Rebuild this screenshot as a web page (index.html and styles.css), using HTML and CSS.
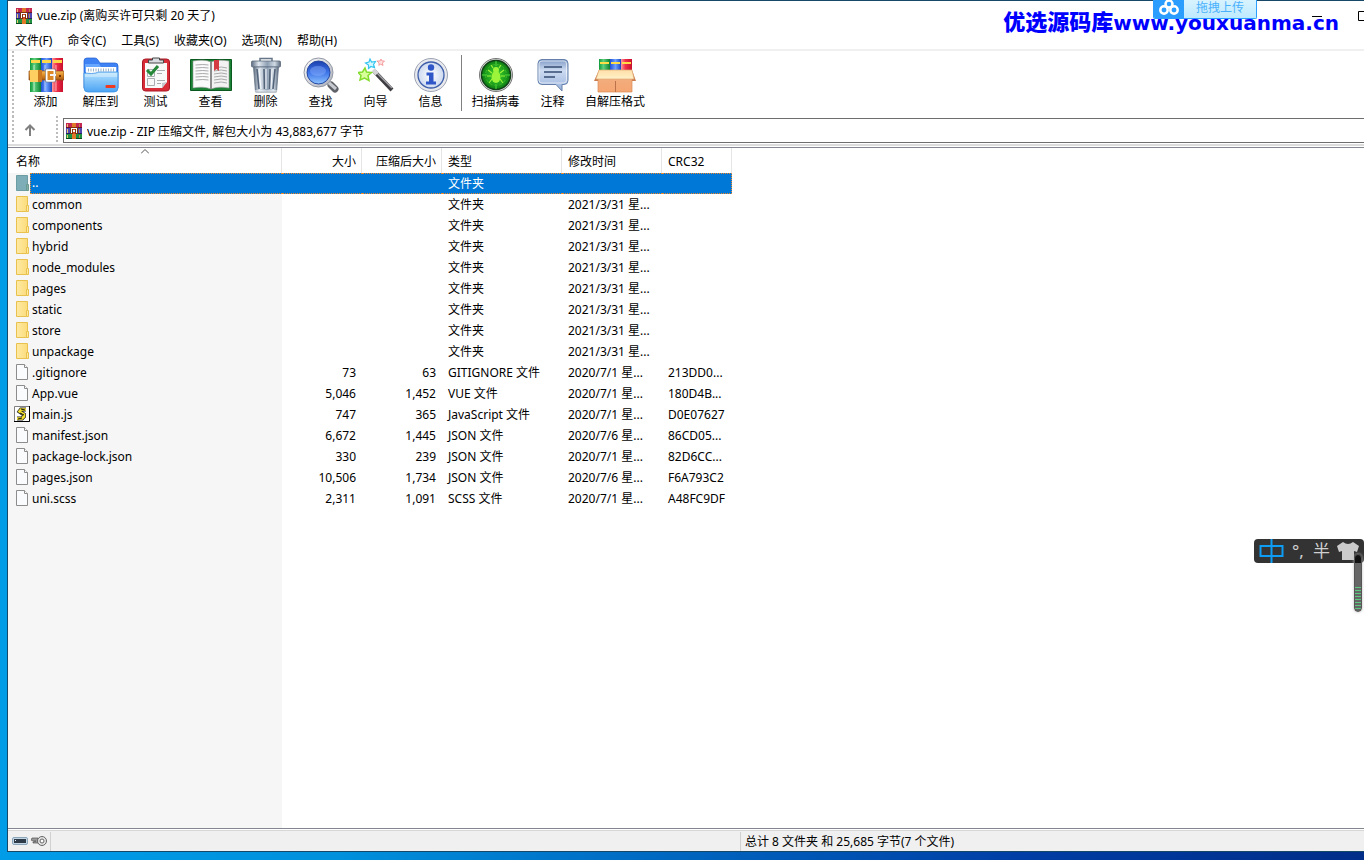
FILE: index.html
```html
<!DOCTYPE html>
<html lang="zh-CN">
<head>
<meta charset="utf-8">
<title>vue.zip</title>
<link rel="stylesheet" href="styles.css">
</head>
<body>
<svg class="defs" aria-hidden="true">
  <defs>
    <linearGradient id="g-red"><stop offset="0" stop-color="#ff9a9a"/><stop offset=".4" stop-color="#f0304a"/><stop offset="1" stop-color="#c80f2c"/></linearGradient>
    <linearGradient id="g-green"><stop offset="0" stop-color="#0f9a3c"/><stop offset=".4" stop-color="#5fd07c"/><stop offset="1" stop-color="#0b8030"/></linearGradient>
    <linearGradient id="g-blue"><stop offset="0" stop-color="#1f50d8"/><stop offset=".5" stop-color="#6da0ff"/><stop offset="1" stop-color="#1746c0"/></linearGradient>
    <linearGradient id="g-belt" x2="0" y2="1"><stop offset="0" stop-color="#f5b955"/><stop offset=".5" stop-color="#dc8826"/><stop offset="1" stop-color="#a8570e"/></linearGradient>
    <linearGradient id="g-fold" x2="0" y2="1"><stop offset="0" stop-color="#b4e2ff"/><stop offset="1" stop-color="#4ba3f3"/></linearGradient>
    <linearGradient id="g-metal"><stop offset="0" stop-color="#5d6c80"/><stop offset=".25" stop-color="#dfe6ee"/><stop offset=".55" stop-color="#8fa0b4"/><stop offset=".8" stop-color="#d0dae4"/><stop offset="1" stop-color="#5d6c80"/></linearGradient>
    <linearGradient id="g-lens" x2="0" y2="1"><stop offset="0" stop-color="#1a3fae"/><stop offset=".5" stop-color="#3d74e8"/><stop offset="1" stop-color="#8fc4ff"/></linearGradient>
    <linearGradient id="g-ring" x2="1" y2="1"><stop offset="0" stop-color="#fff"/><stop offset="1" stop-color="#a7acb8"/></linearGradient>
    <linearGradient id="g-bubble" x2="0" y2="1"><stop offset="0" stop-color="#7f9ac6"/><stop offset=".35" stop-color="#cddbf1"/><stop offset="1" stop-color="#98b2dc"/></linearGradient>
    <linearGradient id="g-box" x2="0" y2="1"><stop offset="0" stop-color="#f2ae80"/><stop offset="1" stop-color="#f5a672"/></linearGradient>
    <linearGradient id="g-flap" x2="0" y2="1"><stop offset="0" stop-color="#ffdfa8"/><stop offset="1" stop-color="#fff0c8"/></linearGradient>
    <linearGradient id="g-dir" x2="1"><stop offset="0" stop-color="#ffeaa4"/><stop offset="1" stop-color="#fbdc7c"/></linearGradient>
    <radialGradient id="g-scan"><stop offset="0" stop-color="#42d830"/><stop offset=".7" stop-color="#1d9c1c"/><stop offset="1" stop-color="#0c7a12"/></radialGradient>
    <radialGradient id="g-info"><stop offset="0" stop-color="#fff"/><stop offset="1" stop-color="#ccd9ef"/></radialGradient>
  </defs>
  <symbol id="i-rar" viewBox="0 0 16 16">
    <path fill="#c42850" d="M0 0h16v5H0z"/><path fill="#5048b0" d="M0 5h16v6H0z"/><path fill="#1f8f42" d="M0 11h16v5H0z"/>
    <path fill="#6c1228" d="M0 4h16v1H0z"/><path fill="#242464" d="M0 10h16v1H0z"/><path fill="#0a4a1c" d="M0 15h16v1H0z"/>
    <path fill="#e8c86c" d="M1 1h1v3H1zm0 5h1v4H1zm0 6h1v3H1z"/><path fill="#b98a50" d="M13 1h1v3h-1zm0 5h1v4h-1zm0 6h1v3h-1z"/>
    <path fill="#e07a28" d="M6 0h4v16H6z"/><path fill="#7a3410" d="M4 4h8v7H4z"/><path fill="#d84a1c" d="M7 5h2v6H7z"/><path fill="#fff" d="M5 5h6v1H5zM5 6h1v4H5zm5 0h1v4h-1zM7 7h2v2H7z"/>
  </symbol>
  <symbol id="i-dir" viewBox="0 0 14 16"><path fill="url(#g-dir)" stroke="#e8c14e" d="M.5.5h11v15H.5z"/><path fill="#ffeaa0" stroke="#e8c14e" d="M10.500 9.500h2v6h-2z"/></symbol>
  <symbol id="i-dir-sel" viewBox="0 0 14 16"><path fill="#7dadb6" stroke="#6c9da3" d="M.5.5h11v15H.5z"/><path fill="#80aea8" stroke="#6b9a91" d="M10.500 9.500h2v6h-2z"/></symbol>
  <symbol id="i-file" viewBox="0 0 14 16"><path fill="#fafbfc" stroke="#8c8c8c" d="M.5.500h8l3 3v12H.5z"/><path fill="#fff" stroke="#8c8c8c" d="M8.500.5v3h3"/></symbol>
  <symbol id="i-js" viewBox="0 0 16 16"><path fill="#fff" stroke="#808080" d="M.5.5h15v15H.5z"/><path fill="none" stroke="#000" d="M15.500 0v15.500H0"/><path fill="none" stroke="#222" stroke-width="4" d="M12 3.500H7L5.500 5.500l4.500 3v2L8 12.500H3"/><path fill="none" stroke="#f4e22c" stroke-width="2.600" d="M12 3.500H7L5.500 5.500l4.500 3v2L8 12.500H3"/><path stroke="#111" d="m7 3 4 1M6 7l4 2M4 13l4-1"/></symbol>
</svg>

<main class="window">
  <header class="title-bar">
    <svg class="icon-16"><use href="#i-rar"/></svg>
    <h1>vue.zip (离购买许可只剩 20 天了)</h1>
    <div class="controls">
      <button type="button" aria-label="最小化"><svg viewBox="0 0 10 10"><path d="M0 5.500h10"/></svg></button>
      <button type="button" aria-label="最大化"><svg viewBox="0 0 10 10"><path d="M.5.5h9v9h-9z"/></svg></button>
    </div>
  </header>

  <nav class="menu">
    <button type="button">文件(F)</button><button type="button">命令(C)</button><button type="button">工具(S)</button><button type="button">收藏夹(O)</button><button type="button">选项(N)</button><button type="button">帮助(H)</button>
  </nav>

  <div class="toolbar">
    <span class="grip"></span>
    <button type="button" class="tool"><svg viewBox="0 0 36 36">
      <path fill="url(#g-green)" d="M2 1h11v34H2z"/><path fill="url(#g-blue)" d="M13 1h11v34H13z"/><path fill="url(#g-red)" d="M24 1h11v34H24z"/>
      <path fill="#ffd84a" d="M3 3h9v3H3zm11 0h9v3h-9zm11 0h9v3h-9z"/><path fill="#fff" opacity=".3" d="M5 8h2v26H5zm11 0h2v26h-2zm11 0h2v26h-2z"/>
      <path fill="url(#g-belt)" stroke="#8a4c12" stroke-width=".7" d="M1 14h35v9H1z"/><path fill="#ffcf62" d="M2 13h8l4 5-4 7H2z"/><path fill="#cc7820" d="M10 13h4v12h-4z"/>
      <rect x="18.500" y="13" width="8" height="11" rx="1" fill="#dc8826" stroke="#fff" stroke-width="2"/><path fill="none" stroke="#777" stroke-width=".6" d="M17.500 12h10v13h-10z"/><path fill="#f4f4f4" d="M22 17h6v2h-6z"/><path fill="#6e3608" d="M31 18h2v2h-2z"/>
    </svg>添加</button>
    <button type="button" class="tool"><svg viewBox="0 0 36 36">
      <path fill="#3f82f4" stroke="#205fd0" stroke-width=".7" d="M1 31V4q0-3 3-3h8q2 0 3 2l2 3h15q3 0 3 3v22z"/><path fill="#68a7ff" d="M2 7h14l2 3h16v5H2z"/>
      <path fill="#fff" d="M3 10h30v10H3z"/><path stroke="#9ab2c8" stroke-dasharray="1 1.500" stroke-width="3" d="M5 13h27"/>
      <path fill="url(#g-fold)" stroke="#3b8fe2" stroke-width=".8" d="M1 16q9 1 12 0l2-1h20v16q0 4-4 4H5q-4 0-4-4z"/><path fill="#fff" opacity=".35" d="M2 17q10 1 14-1h18v4H2z"/><rect x="22.500" y="28" width="10" height="3" rx="1" fill="#ee3a20"/>
    </svg>解压到</button>
    <button type="button" class="tool"><svg viewBox="0 0 36 36">
      <rect x="4.500" y="2" width="27" height="32" rx="3" fill="#d82c38" stroke="#a81824"/><path fill="#f8f8f8" d="M7 6h22v19l-5 6H7z"/><path fill="#c4c8cc" d="m29 25-5 6v-5z"/>
      <path fill="#d9dde1" stroke="#444" d="M10.500 6V3h4V1h7v2h4v3z"/><path fill="none" stroke="#a8adb2" d="M9.500 12.500h7v7h-7zm0 9h7v7h-7zM19 13.500h8m-8 3h5m-5 7h8m-8 3h4"/><path fill="none" stroke="#248838" stroke-width="3" d="m9 13 4 4 7-8"/>
    </svg>测试</button>
    <button type="button" class="tool"><svg class="wide" viewBox="0 0 42 36">
      <path fill="#1b8134" stroke="#0a5a20" d="M.5 2.500h41v31H.5z"/><path fill="#fafafa" stroke="#999" stroke-width=".6" d="M3 4q12-2 18 1v27q-7-3-18-1z"/><path fill="#f2f2f2" stroke="#999" stroke-width=".6" d="M39 4Q27 2 21 5v27q7-3 18-1z"/>
      <path fill="none" stroke="#a9aaac" d="M5.500 8q8-1 13 0m-13 3q8-1 13 0m-13 3q8-1 13 0m-13 3q8-1 13 0m-13 3q8-1 13 0m-13 3q8-1 13 0M24 11q8-2 13 0m-13 3q8-2 13 0m-13 3q8-2 13 0m-13 3q8-2 13 0m-13 3q8-2 13 0m-13 3q8-2 13 0"/><path stroke="#8c8c8c" stroke-width="2" d="M21 5v27"/><path fill="#d43a42" d="M24 3h5v11l-2.500-2L24 14z"/>
    </svg>查看</button>
    <button type="button" class="tool"><svg viewBox="0 0 36 36">
      <path fill="none" stroke="#667689" stroke-width="1.500" d="M12 4V1.500h12V4"/><rect x="3.500" y="4" width="29" height="6" rx="1" fill="url(#g-metal)" stroke="#5c6a7c" stroke-width=".8"/>
      <path fill="url(#g-metal)" stroke="#617083" stroke-width=".8" d="M5.500 10h25l-2 25h-21z"/><path stroke="#53647a" stroke-width="1.600" d="m9 12 2 20m5-20 .5 20M22 12l-.5 20M27 12l-2 20"/><path stroke="#f5f8fb" d="m11 12 2 20m5-20v20m6-20-1 20M7 34h22"/>
    </svg>删除</button>
    <button type="button" class="tool"><svg viewBox="0 0 36 36">
      <path stroke="#5e6168" stroke-width="7" stroke-linecap="round" d="m28 28 4 4"/><path stroke="#c6cad0" stroke-width="3" d="m25 25 8 7"/><circle cx="15.500" cy="15.500" r="14.500" fill="url(#g-ring)" stroke="#9398a4"/><circle cx="15.500" cy="15.500" r="11.500" fill="url(#g-lens)" stroke="#2447a0"/><ellipse cx="15" cy="14" rx="8" ry="5" fill="#95b8ff" opacity=".4"/>
    </svg>查找</button>
    <button type="button" class="tool"><svg viewBox="0 0 36 36">
      <path stroke="#3d3d42" stroke-width="4" d="m16 14 18 19"/><path stroke="#a4a4a8" stroke-width="1.500" d="m16 13 18 18"/><path stroke="#d5d5d8" stroke-width="4.500" d="m15 13 4 4"/>
      <path fill="#d8ff9c" stroke="#83dc2d" stroke-width="1.500" d="m7 11 1.500 4 5 .5-3.500 3 1 5-4.500-2.500L2 23l1-4.500-3-3 4.500-.5z"/><path fill="#d5f8ff" stroke="#35c4ef" stroke-width="1.200" d="m12 2 1.500 3 4-.5-2 3 1 3-3.500-1-2.500 2V8L7.500 6 11 5z"/><path fill="#ffe0e0" stroke="#f28a8a" stroke-width=".8" d="m23 2 1 2h2.500l-2 2 .5 2.500-2.500-1.500-1.500 1.500V6l-2-2h3z"/>
    </svg>向导</button>
    <button type="button" class="tool"><svg viewBox="0 0 36 36">
      <circle cx="18" cy="18" r="16.500" fill="#e8e9ed" stroke="#9da4b4"/><circle cx="18" cy="18" r="13" fill="url(#g-info)" stroke="#3e5ea9" stroke-width="1.300"/><circle cx="18" cy="10.500" r="3.200" fill="#2f57c8"/><path fill="#2f57c8" d="M13.500 15.500h7v9h2.500v3H13v-3h3v-6h-2.500z"/>
    </svg>信息</button>
    <span class="divider"></span>
    <button type="button" class="tool"><svg viewBox="0 0 36 36">
      <circle cx="18" cy="18" r="16.500" fill="#d5d8d5" stroke="#777"/><circle cx="18" cy="18" r="14.500" fill="url(#g-scan)" stroke="#124018" stroke-width="1.500"/><path fill="none" stroke="#50d840" d="M18 4v5m0 18v5M4 18h5m18 0h5"/><circle cx="18" cy="18" r="10.500" fill="none" stroke="#3cb82c" stroke-dasharray="3 2"/>
      <g fill="#9cf53a"><ellipse cx="18" cy="20" rx="4.500" ry="6"/><circle cx="18" cy="13" r="3"/></g><path fill="none" stroke="#9cf53a" stroke-width="1.200" d="m15 11-2-3m8 3 2-3m-9 8-4-3m12 3 4-3m-13 6H9m14 0h4m-13 3-3 4m11-4 3 4"/>
    </svg>扫描病毒</button>
    <button type="button" class="tool"><svg viewBox="0 0 36 36">
      <path fill="url(#g-bubble)" stroke="#6480aa" d="M7 2.500h22q4 0 4 4v17q0 4-4 4h-2V34l-6-6.500H7q-4 0-4-4v-17q0-4 4-4z"/><path fill="none" stroke="#fff" opacity=".6" d="M7 4h22q2.500 0 2.500 3v16q0 3-3 3H7q-3 0-3-3V7q0-3 3-3z"/><path stroke="#344c72" stroke-width="1.500" d="M9 10h18M9 15h18M9 20h11"/>
    </svg>注释</button>
    <button type="button" class="tool"><svg class="wide" viewBox="0 0 42 36">
      <path fill="url(#g-green)" d="M5 2h11v14H5z"/><path fill="url(#g-blue)" d="M16 2h11v14H16z"/><path fill="url(#g-red)" d="M27 2h11v14H27z"/><path fill="#ffdd46" d="M6 5h9v2H6zm11 0h9v2h-9zm11 0h9v2h-9z"/>
      <path fill="#cb7d50" d="m5 13-5 11h5zm33 0 4 11h-4z"/><path fill="url(#g-box)" stroke="#d78a58" stroke-width=".7" d="M4 18h34v17H4z"/><path stroke="#bc724a" d="M21.500 24v11"/><path fill="url(#g-flap)" stroke="#e0ae78" stroke-width=".7" d="M5 13h33l2 9H2z"/>
    </svg>自解压格式</button>
  </div>

  <div class="address-bar">
    <span class="grip"></span>
    <button type="button" class="up" aria-label="上一级"><svg viewBox="0 0 12 12"><path d="M6 12V2M1.500 6 6 1.500 10.500 6"/></svg></button>
    <span class="grip"></span>
    <label class="address"><svg class="icon-16"><use href="#i-rar"/></svg><input type="text" aria-label="地址" value="vue.zip - ZIP 压缩文件, 解包大小为 43,883,677 字节"></label>
  </div>

  <section class="list">
    <table>
      <colgroup><col class="c-name"><col class="c-num"><col class="c-num"><col class="c-type"><col class="c-date"><col class="c-crc"></colgroup>
      <thead><tr><th class="sorted">名称<svg viewBox="0 0 8 5"><path d="M0 4.500 4 .5l4 4"/></svg></th><th class="num">大小</th><th class="num">压缩后大小</th><th>类型</th><th>修改时间</th><th>CRC32</th></tr></thead>
      <tbody>
        <tr class="selected"><td><span class="name"><svg><use href="#i-dir-sel"/></svg><span class="label">..</span></span></td><td></td><td></td><td>文件夹</td><td></td><td></td></tr>
        <tr><td><span class="name"><svg><use href="#i-dir"/></svg>common</span></td><td></td><td></td><td>文件夹</td><td>2021/3/31 星...</td><td></td></tr>
        <tr><td><span class="name"><svg><use href="#i-dir"/></svg>components</span></td><td></td><td></td><td>文件夹</td><td>2021/3/31 星...</td><td></td></tr>
        <tr><td><span class="name"><svg><use href="#i-dir"/></svg>hybrid</span></td><td></td><td></td><td>文件夹</td><td>2021/3/31 星...</td><td></td></tr>
        <tr><td><span class="name"><svg><use href="#i-dir"/></svg>node_modules</span></td><td></td><td></td><td>文件夹</td><td>2021/3/31 星...</td><td></td></tr>
        <tr><td><span class="name"><svg><use href="#i-dir"/></svg>pages</span></td><td></td><td></td><td>文件夹</td><td>2021/3/31 星...</td><td></td></tr>
        <tr><td><span class="name"><svg><use href="#i-dir"/></svg>static</span></td><td></td><td></td><td>文件夹</td><td>2021/3/31 星...</td><td></td></tr>
        <tr><td><span class="name"><svg><use href="#i-dir"/></svg>store</span></td><td></td><td></td><td>文件夹</td><td>2021/3/31 星...</td><td></td></tr>
        <tr><td><span class="name"><svg><use href="#i-dir"/></svg>unpackage</span></td><td></td><td></td><td>文件夹</td><td>2021/3/31 星...</td><td></td></tr>
        <tr><td><span class="name"><svg><use href="#i-file"/></svg>.gitignore</span></td><td class="num">73</td><td class="num">63</td><td>GITIGNORE 文件</td><td>2020/7/1 星...</td><td>213DD0...</td></tr>
        <tr><td><span class="name"><svg><use href="#i-file"/></svg>App.vue</span></td><td class="num">5,046</td><td class="num">1,452</td><td>VUE 文件</td><td>2020/7/1 星...</td><td>180D4B...</td></tr>
        <tr><td><span class="name script"><svg><use href="#i-js"/></svg>main.js</span></td><td class="num">747</td><td class="num">365</td><td>JavaScript 文件</td><td>2020/7/1 星...</td><td>D0E07627</td></tr>
        <tr><td><span class="name"><svg><use href="#i-file"/></svg>manifest.json</span></td><td class="num">6,672</td><td class="num">1,445</td><td>JSON 文件</td><td>2020/7/6 星...</td><td>86CD05...</td></tr>
        <tr><td><span class="name"><svg><use href="#i-file"/></svg>package-lock.json</span></td><td class="num">330</td><td class="num">239</td><td>JSON 文件</td><td>2020/7/1 星...</td><td>82D6CC...</td></tr>
        <tr><td><span class="name"><svg><use href="#i-file"/></svg>pages.json</span></td><td class="num">10,506</td><td class="num">1,734</td><td>JSON 文件</td><td>2020/7/6 星...</td><td>F6A793C2</td></tr>
        <tr><td><span class="name"><svg><use href="#i-file"/></svg>uni.scss</span></td><td class="num">2,311</td><td class="num">1,091</td><td>SCSS 文件</td><td>2020/7/1 星...</td><td>A48FC9DF</td></tr>
      </tbody>
    </table>
  </section>

  <footer class="status">
    <div class="status-icons">
      <svg class="icon-16" viewBox="0 0 16 16"><rect x=".5" y="4.500" width="15" height="7" rx="1.500" fill="#c4d6e4" stroke="#8ba4b8"/><path fill="#2d3c48" d="M2 6h12v4H2z"/><path fill="#e8f4ff" d="M3 7h1v1H3z"/></svg>
      <svg class="icon-16" viewBox="0 0 16 16"><path fill="#9a9a9a" stroke="#555" stroke-width=".7" d="M7 5H1L0 7l2 1h3l-3 1v1h5z"/><circle cx="11" cy="8" r="4.500" fill="#e2e2e2" stroke="#666"/><circle cx="11" cy="8" r="2" fill="#fff" stroke="#666"/></svg>
    </div>
    <div></div>
    <div class="totals">总计 8 文件夹 和 25,685 字节(7 个文件)</div>
  </footer>
</main>

<div class="watermark"><span>优选源码库</span>www.youxuanma.cn</div>
<button type="button" class="upload"><span class="upload-logo"><svg viewBox="0 0 20 16"><g fill="none" stroke="#fff" stroke-width="2.500"><circle cx="10" cy="4" r="3.500"/><circle cx="5" cy="10" r="3.700"/><circle cx="15" cy="10" r="3.700"/></g></svg></span><span class="upload-text">拖拽上传</span></button>
<div class="ime">
  <svg class="ime-zh" viewBox="0 0 24 24" role="img" aria-label="中"><path d="M1 7h22v10H1zM12 0v24"/></svg>
  <span class="ime-punct">°,</span><span>半</span>
  <svg class="shirt" viewBox="0 0 22 18"><path d="M6 0q5 4 10 0l6 4-2 6-3-1v9H5V9l-3 1-2-6z"/></svg>
</div>
<div class="meter"></div>
</body>
</html>
```
FILE: styles.css
```css
* { box-sizing: border-box; }
body {
  margin: 0;
  height: 100vh;
  padding: 0 0 8px 7px;
  overflow: hidden;
  position: relative;
  background: linear-gradient(90deg, #009ce8 0, #0090dc 25%, #0062bc 52%, #003da4 75%, #002d88 100%);
  color: #000;
  font: 12px/16px "Noto Sans", "Noto Sans CJK SC", sans-serif;
}
button, input { font: inherit; color: inherit; border: 0; padding: 0; margin: 0; background: none; }
svg { display: block; flex: none; }
.defs { position: absolute; width: 0; height: 0; }
.icon-16 { width: 16px; height: 16px; }

.window {
  height: 100%;
  display: flex;
  flex-direction: column;
  background: #fff;
  border: 1px solid #184868;
  border-right: 0;
}
.title-bar { display: flex; align-items: center; gap: 5px; height: 29px; padding-left: 8px; flex: none; overflow: hidden; }
.title-bar h1 { flex: 1; margin: 0; font-size: 12px; font-weight: 400; }
.controls { display: flex; gap: 36px; margin-right: -4px; }
.controls svg { width: 10px; height: 10px; fill: none; stroke: #000; }

.menu { display: flex; gap: 15px; height: 21px; padding: 2px 7px 0; border-bottom: 2px solid #f0f0f0; flex: none; line-height: 17px; }

.grip { width: 2px; align-self: stretch; flex: none; background: repeating-linear-gradient(#bcbcbc 0 2px, #fff 2px 4px); }
.toolbar { display: flex; align-items: stretch; height: 65px; padding: 0 0 0 4px; flex: none; }
.toolbar .grip { margin-right: 4px; }
.tool { min-width: 55px; display: flex; flex-direction: column; align-items: center; padding: 6px 3px 0; gap: 1px; white-space: nowrap; }
.tool svg { width: 36px; height: 36px; }
.tool svg.wide { width: 42px; }
.divider { width: 1px; margin: 4px 6px 5px 3px; background: #808080; }
.divider ~ .tool { margin-right: 2px; }

.address-bar { display: flex; height: 30px; padding-left: 4px; border-bottom: 2px solid #dcdcdc; flex: none; }
.up { width: 42px; padding-right: 10px; display: flex; align-items: center; justify-content: center; }
.up svg { width: 12px; height: 12px; fill: none; stroke: #808080; stroke-width: 2; }
.address { flex: 1; display: flex; align-items: center; gap: 5px; margin: 2px 0 1px 5px; padding-left: 2px; border: 1px solid #6e6e6e; border-right: 0; }
.address input { flex: 1; outline: 0; padding-top: 2px; }

.list {
  flex: 1;
  min-height: 0;
  overflow: hidden;
  border: 1px solid #828790;
  border-width: 1px 0;
  margin-top: 1px;
  background: linear-gradient(90deg, #f6f6f6 274px, #fff 274px);
}
.list::before { content: ""; display: block; height: 25px; margin-bottom: -25px; background: #fff; }
table { width: 724px; table-layout: fixed; border-collapse: separate; border-spacing: 0; }
.c-name { width: 274px; }
.c-num { width: 80px; }
.c-type { width: 120px; }
.c-date { width: 100px; }
.c-crc { width: 70px; }
th { position: relative; height: 25px; padding: 2px 6px 0; font-weight: 400; text-align: left; background: #fff; box-shadow: inset -1px 0 #e5e5e5; white-space: nowrap; }
th.sorted { padding-left: 8px; }
th svg { position: absolute; top: 1px; left: 0; right: 0; margin: 0 auto; width: 8px; height: 5px; fill: none; stroke: #555; }
td { height: 21px; padding: 0 6px; white-space: nowrap; }
td:first-child { padding: 0 0 0 8px; }
th.num, td.num { text-align: right; }
.name { display: flex; align-items: center; gap: 2px; height: 19px; }
.name svg { width: 14px; height: 16px; margin-bottom: 1px; }
.name.script { margin-left: -2px; }
.name.script svg { width: 16px; }
.selected { color: #fff; }
.selected td + td { background: #0078d7; border: 1px dotted #f08828; border-width: 1px 0; }
.selected td:last-child { border-right-width: 1px; }
.selected .name { height: 21px; gap: 0; }
.label { flex: 1; height: 21px; padding: 1px 0 0 1px; background: #0078d7; border: 1px dotted #f08828; border-right: 0; }

.status { display: grid; grid-template-columns: 42px 690fr 624fr; height: 22px; padding-top: 2px; flex: none; background: #f0f0f0; border-top: 1px solid #fff; box-shadow: inset 0 1px #d7d7d7; }
.status > div + div { border-left: 1px solid #d0d0d0; }
.status-icons { display: flex; align-items: center; gap: 3px; padding: 0 0 2px 4px; }
.totals { padding: 2px 4px 0; white-space: nowrap; }

.watermark { position: absolute; top: 4px; right: 25px; color: #00f; font: bold 20px/32px "DejaVu Sans", "Noto Sans CJK SC", sans-serif; white-space: nowrap; }
.watermark span { font-family: "Noto Sans CJK SC", sans-serif; font-size: 22px; font-weight: 900; }
.upload { position: absolute; top: 0; right: 107px; display: flex; width: 104px; height: 19px; border: 1px solid #2a9dff; border-top: 0; border-radius: 0 0 2px 2px; overflow: hidden; background: linear-gradient(#d8f3ff, #bdeaff); color: #4ab0fc; }
.upload-logo { width: 30px; background: #2a9dff; display: flex; justify-content: center; }
.upload-logo svg { width: 20px; height: 16px; }
.upload-text { flex: 1; text-align: center; line-height: 15px; }
.ime { position: absolute; top: 539px; right: 0; display: flex; align-items: center; width: 110px; height: 24px; padding-left: 5px; background: #333; border-radius: 4px; color: #d0d0d0; font-size: 17px; line-height: 24px; }
.ime-zh { width: 25px; height: 24px; fill: none; stroke: #0e9df4; stroke-width: 2; }
.ime-punct { width: 29px; padding-left: 8px; }
.shirt { width: 22px; height: 18px; margin-left: 7px; fill: #ccc; }
.meter { position: absolute; top: 554px; right: 2px; width: 8px; height: 58px; border-radius: 4px; border: 1px solid #555; background: repeating-linear-gradient(#5fc880 0 1px, #666 1px 3px) 0 32px / 6px 23px no-repeat, linear-gradient(#111 8px, #666 8px); box-shadow: 0 0 3px #bbb; }
```
